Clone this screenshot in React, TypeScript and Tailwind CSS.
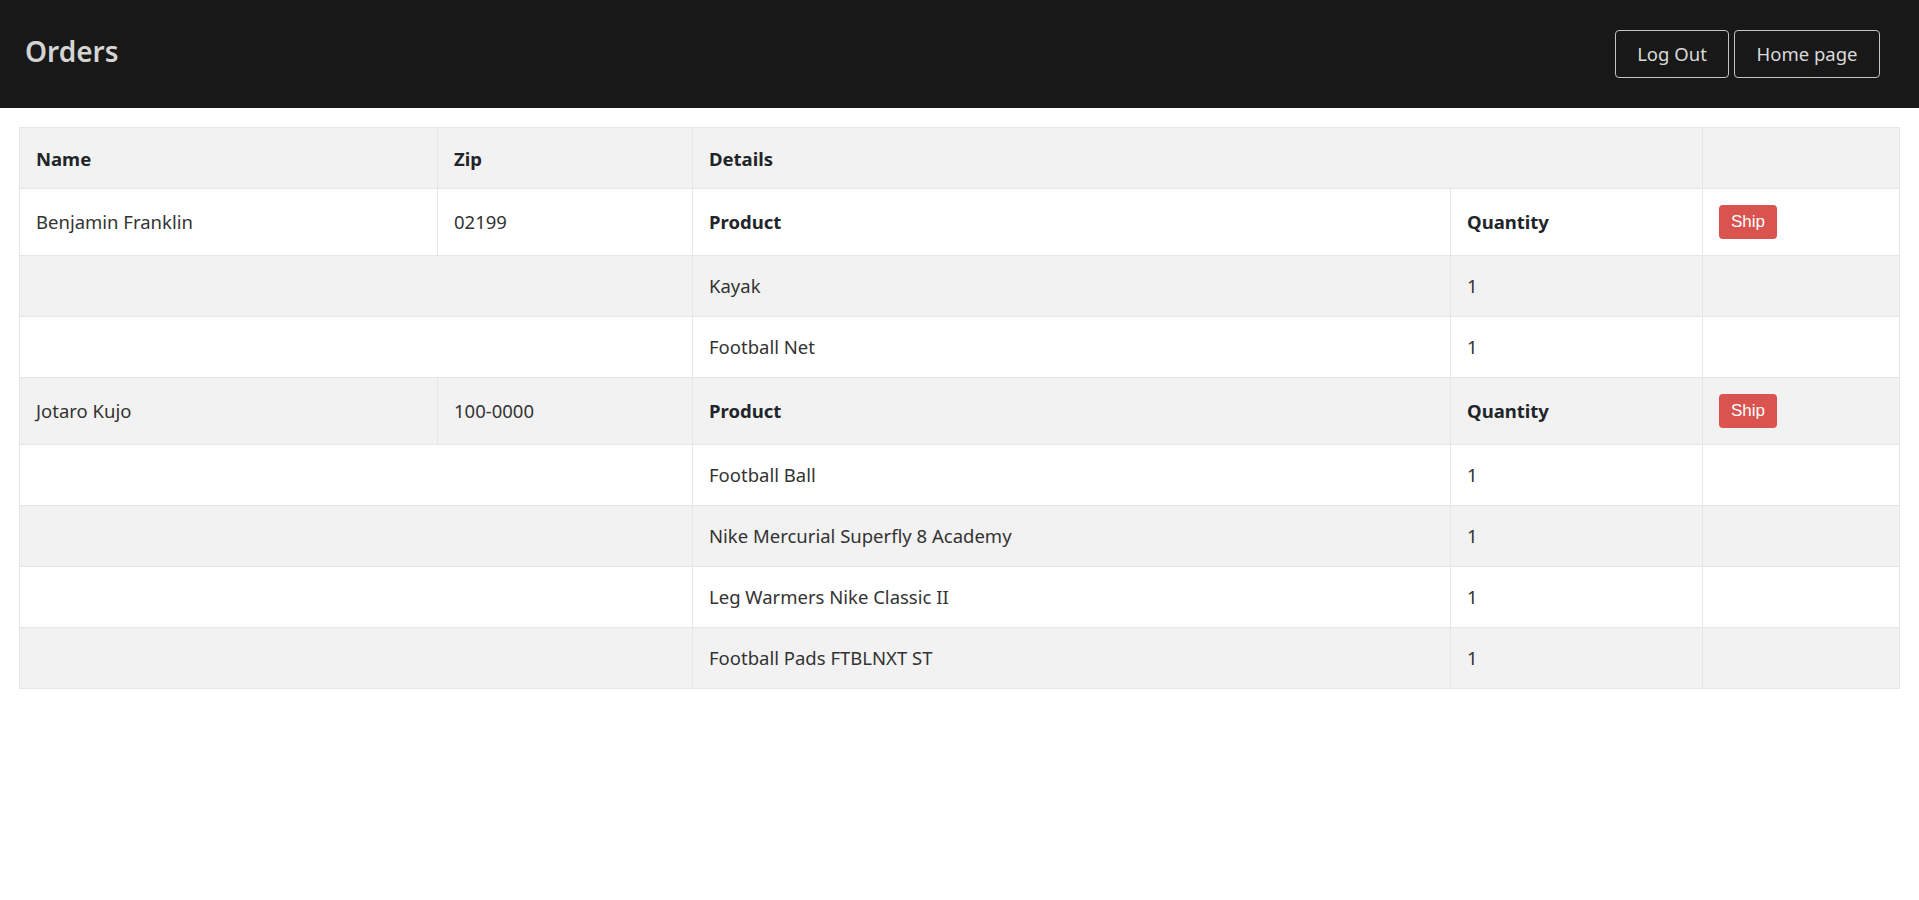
type Order = {
  name: string
  zip: string
  items: { product: string; qty: number }[]
}

const orders: Order[] = [
  {
    name: "Benjamin Franklin",
    zip: "02199",
    items: [
      { product: "Kayak", qty: 1 },
      { product: "Football Net", qty: 1 },
    ],
  },
  {
    name: "Jotaro Kujo",
    zip: "100-0000",
    items: [
      { product: "Football Ball", qty: 1 },
      { product: "Nike Mercurial Superfly 8 Academy", qty: 1 },
      { product: "Leg Warmers Nike Classic II", qty: 1 },
      { product: "Football Pads FTBLNXT ST", qty: 1 },
    ],
  },
]

const cell = "border border-[#e6e6e6] px-4 align-middle"

const App = () => {
  let stripe = 0
  const rowBg = () => (stripe++ % 2 === 0 ? "bg-white" : "bg-[#f2f2f2]")

  return (
    <div className="min-h-screen bg-white font-['Noto_Sans',sans-serif] text-[#333]">
      <header className="flex h-[108px] items-start justify-between bg-[#181818] pl-[25px] pr-[39px]">
        <h1 className="mt-[31px] text-[28px] font-semibold leading-[40px] text-[#d4d4d4]">Orders</h1>
        <div className="mt-[30px] flex gap-[5px]">
          <button className="h-[48px] w-[114px] rounded-[4px] border border-[#c4c4c4] text-[18.5px] text-[#dadada]">
            Log Out
          </button>
          <button className="h-[48px] w-[146px] rounded-[4px] border border-[#c4c4c4] text-[18.5px] text-[#dadada]">
            Home page
          </button>
        </div>
      </header>

      <div className="px-[19px] pt-[19px]">
        <table className="w-full border-collapse border border-[#e6e6e6] text-left text-[18.5px]">
          <colgroup>
            <col className="w-[418px]" />
            <col className="w-[255px]" />
            <col className="w-[758px]" />
            <col className="w-[252px]" />
            <col />
          </colgroup>
          <thead>
            <tr className="h-[61px] bg-[#f2f2f2] font-bold text-[#212529]">
              <th className={`${cell} pt-[2px]`}>Name</th>
              <th className={`${cell} pt-[2px]`}>Zip</th>
              <th className={`${cell} pt-[2px]`} colSpan={2}>Details</th>
              <th className={cell}></th>
            </tr>
          </thead>
          <tbody>
            {orders.map((o) => (
              <>
                <tr key={o.name} className={`h-[67px] ${rowBg()}`}>
                  <td className={cell}>{o.name}</td>
                  <td className={cell}>{o.zip}</td>
                  <td className={`${cell} font-bold text-[#212529]`}>Product</td>
                  <td className={`${cell} font-bold text-[#212529]`}>Quantity</td>
                  <td className={cell}>
                    <button className="h-[34px] w-[58px] rounded-[4px] bg-[#d9534f] font-['Liberation_Sans',sans-serif] text-[17px] text-white">
                      Ship
                    </button>
                  </td>
                </tr>
                {o.items.map((it) => (
                  <tr key={o.name + it.product} className={`h-[61px] ${rowBg()}`}>
                    <td className={cell} colSpan={2}></td>
                    <td className={cell}>{it.product}</td>
                    <td className={cell}>{it.qty}</td>
                    <td className={cell}></td>
                  </tr>
                ))}
              </>
            ))}
          </tbody>
        </table>
      </div>
    </div>
  )
}

export default App
